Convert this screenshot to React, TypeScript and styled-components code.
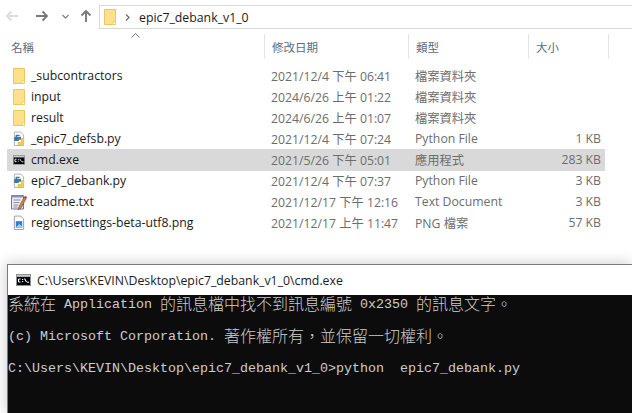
import React from "react";
import styled, { createGlobalStyle } from "styled-components";

const UI_FONT = `"Noto Sans CJK TC", "Noto Sans", sans-serif`;
const LATIN_FONT = `"Open Sans", "Noto Sans CJK TC", sans-serif`;

const GlobalStyle = createGlobalStyle`
  html, body {
    margin: 0;
    padding: 0;
    background: #fff;
  }
  #root {
    width: 632px;
    height: 413px;
    overflow: hidden;
  }
`;

interface FileRow {
  name: string;
  date: string;
  type: string;
  size?: string;
  icon: "folder" | "python" | "cmd" | "text" | "image";
  selected?: boolean;
}

const rows: FileRow[] = [
  { name: "_subcontractors", date: "2021/12/4 下午 06:41", type: "檔案資料夾", icon: "folder" },
  { name: "input", date: "2024/6/26 上午 01:22", type: "檔案資料夾", icon: "folder" },
  { name: "result", date: "2024/6/26 上午 01:07", type: "檔案資料夾", icon: "folder" },
  { name: "_epic7_defsb.py", date: "2021/12/4 下午 07:24", type: "Python File", size: "1 KB", icon: "python" },
  { name: "cmd.exe", date: "2021/5/26 下午 05:01", type: "應用程式", size: "283 KB", icon: "cmd", selected: true },
  { name: "epic7_debank.py", date: "2021/12/4 下午 07:37", type: "Python File", size: "3 KB", icon: "python" },
  { name: "readme.txt", date: "2021/12/17 下午 12:16", type: "Text Document", size: "3 KB", icon: "text" },
  { name: "regionsettings-beta-utf8.png", date: "2021/12/17 上午 11:47", type: "PNG 檔案", size: "57 KB", icon: "image" },
];

const Page = styled.div`
  width: 632px;
  height: 413px;
  display: flex;
  flex-direction: column;
  background: #fff;
`;

const Explorer = styled.div`
  height: 264px;
  flex: none;
  background: #fff;
  font-family: ${LATIN_FONT};
`;

const NavBar = styled.div`
  height: 34px;
  display: flex;
  align-items: flex-start;
`;

const NavButtons = styled.div`
  width: 99px;
  height: 32px;
  flex: none;
  display: flex;
  align-items: center;
  padding-left: 5px;
  box-sizing: border-box;
`;

const NavButton = styled.span<{ $left: number }>`
  width: 14px;
  margin-left: ${(p) => p.$left}px;
  display: flex;
  justify-content: center;
  align-items: center;
`;

const AddressBar = styled.div`
  flex: 1;
  height: 22px;
  margin-top: 5px;
  border: 1px solid #d9d9d9;
  border-right: none;
  display: flex;
  align-items: center;
  padding-left: 4px;
  gap: 9px;
  font-size: 12.3px;
  color: #1a1a1a;
`;

const Header = styled.div`
  height: 25px;
  display: grid;
  grid-template-columns: 265px 144px 120px 80px;
  position: relative;
`;

const HeaderCell = styled.div<{ $pad?: number }>`
  border-right: 1px solid #e5e5e5;
  padding-left: ${(p) => p.$pad ?? 7}px;
  font-size: 11.5px;
  font-family: ${UI_FONT};
  color: #5b6b80;
  display: flex;
  align-items: center;
`;

const SortCaret = styled.svg`
  position: absolute;
  left: 131px;
  top: -1px;
`;

const FileList = styled.div`
  padding-top: 6px;
`;

const Row = styled.div<{ $selected?: boolean }>`
  height: 21px;
  margin-left: 7px;
  width: 598px;
  display: grid;
  grid-template-columns: 257px 144px 120px 73px;
  align-items: center;
  font-size: 12.25px;
  background: ${(p) => (p.$selected ? "#d9d9d9" : "transparent")};
  box-shadow: ${(p) => (p.$selected ? "0 1px 0 #d9d9d9" : "none")};
  color: #6d6d6d;
`;

const NameCell = styled.div`
  display: flex;
  align-items: center;
  gap: 6px;
  padding-left: 6px;
  color: #1a1a1a;
  white-space: nowrap;
`;

const IconSlot = styled.span`
  width: 12px;
  height: 16px;
  display: flex;
  align-items: center;
  justify-content: center;
  flex: none;
`;

const DateCell = styled.div`
  padding-left: 7px;
  white-space: nowrap;
`;

const TypeCell = styled.div`
  padding-left: 7px;
  white-space: nowrap;
`;

const SizeCell = styled.div`
  text-align: right;
  white-space: nowrap;
`;

const ConsoleWindow = styled.div`
  flex: 1;
  margin-left: 7px;
  border: 1px solid #7a7a7a;
  border-right: none;
  border-bottom: none;
  box-shadow: 0 0 14px rgba(0, 0, 0, 0.22);
  display: flex;
  flex-direction: column;
  min-height: 0;
`;

const TitleBar = styled.div`
  height: 30px;
  flex: none;
  background: #fff;
  display: flex;
  align-items: center;
  padding-left: 8px;
  gap: 6px;
  font-family: ${LATIN_FONT};
  font-size: 12.3px;
  color: #1a1a1a;
  white-space: nowrap;
`;

const ConsoleBody = styled.div`
  flex: 1;
  background: #0c0c0c;
  color: #cccccc;
  font-family: "Liberation Mono", monospace;
  font-size: 13.33px;
  line-height: 16px;
  padding-top: 2px;
  white-space: pre;
`;

const ConsoleLine = styled.div`
  height: 32px;
`;

const Wide = styled.span`
  font-family: "Noto Sans CJK TC", sans-serif;
  font-size: 16px;
  font-weight: 300;
  line-height: 0;
  vertical-align: -2px;
`;

const FolderIcon = () => (
  <svg width="12" height="16" viewBox="0 0 12 16">
    <path d="M.5.5h11v15H.5z" fill="#fde08b" stroke="#ebc85a" />
    <path d="M9 12.5h2.5v3H9z" fill="#fff3c9" stroke="#ebc85a" strokeWidth=".7" />
  </svg>
);

const PythonIcon = () => (
  <svg width="13" height="16" viewBox="0 0 13 16">
    <path d="M1.5.5h7l3 3v11.5h-10z" fill="#fff" stroke="#a4aeb9" />
    <path d="M3.2 3.5h4v1.2H4.5v.8h4.2v3.2H6.2v1.6H2.5C.5 10.3.5 5.5 2.8 5.5V4z" fill="#3f77ad" />
    <path d="M10.5 7c2.2 0 2.2 5 .1 5v1.6c0 1.6-5.6 1.6-5.6 0v-2.4h3.6V7z" fill="#f4c93f" />
  </svg>
);

const CmdIcon = () => (
  <svg width="15" height="12" viewBox="0 0 15 12">
    <rect width="15" height="12" fill="#8d9298" />
    <rect x="1" y="1" width="13" height="1.5" fill="#c5c9ce" />
    <rect x="1" y="3" width="13" height="8" fill="#000" />
    <path d="M2.5 5h2M2.5 5v3M2.5 8h2M6 5.5h1.2M6 7.5h1.2M8.5 4.5L10.5 8M11 8.3h2" stroke="#fff" fill="none" strokeWidth="1.1" />
  </svg>
);

const TextIcon = () => (
  <svg width="16" height="16" viewBox="0 0 16 16" style={{ flex: "none" }}>
    <path d="M.5 1.5h12v13.5H.5z" fill="#eeeaf6" stroke="#7470a8" />
    <path d="M.5 1.5h12v2H.5z" fill="#8f8cc0" />
    <path d="M2.5 6h7M2.5 8.5h6M2.5 11h5M2.5 13h4" stroke="#8c8c9c" />
    <path d="M7.5 13.5l5.5-10 2.2 1.2-5.5 10-2.6 1z" fill="#c98236" stroke="#5d4a3c" strokeWidth=".5" />
    <path d="M13 3.5l1-1.8 2 1.2-.8 1.8z" fill="#b23a3a" />
  </svg>
);

const ImageIcon = () => (
  <svg width="13" height="16" viewBox="0 0 13 16">
    <path d="M1.5.5h7l3 3v11.5h-10z" fill="#fff" stroke="#8f9aa7" />
    <rect x="3" y="6" width="7" height="7" fill="#2f7fd6" />
    <path d="M3 13l4-4 3 3v1z" fill="#9fd0f5" />
  </svg>
);

const iconFor = (icon: FileRow["icon"]) => {
  switch (icon) {
    case "folder":
      return <FolderIcon />;
    case "python":
      return <PythonIcon />;
    case "cmd":
      return <CmdIcon />;
    case "text":
      return <TextIcon />;
    default:
      return <ImageIcon />;
  }
};

const Arrow = ({ dir, color }: { dir: "left" | "right" | "up"; color: string }) => {
  const d = {
    left: "M13 7H2M6.5 2.5L2 7l4.5 4.5",
    right: "M1 7h11M7.5 2.5L12 7l-4.5 4.5",
    up: "M7 13V2M2.5 6.5L7 2l4.5 4.5",
  }[dir];
  return (
    <svg width="14" height="14" viewBox="0 0 14 14">
      <path d={d} fill="none" stroke={color} strokeWidth="1.9" />
    </svg>
  );
};

export default function App() {
  return (
    <Page>
      <GlobalStyle />
      <Explorer>
        <NavBar>
          <NavButtons>
            <NavButton $left={0}>
              <Arrow dir="left" color="#dcdcdc" />
            </NavButton>
            <NavButton $left={16}>
              <Arrow dir="right" color="#7a7a7a" />
            </NavButton>
            <NavButton $left={9}>
              <svg width="7" height="5" viewBox="0 0 7 5">
                <path d="M.5 1l3 3 3-3" fill="none" stroke="#8a8a8a" strokeWidth="1.4" />
              </svg>
            </NavButton>
            <NavButton $left={7}>
              <Arrow dir="up" color="#7a7a7a" />
            </NavButton>
          </NavButtons>
          <AddressBar>
            <FolderIcon />
            <svg width="5" height="7" viewBox="0 0 5 7">
              <path d="M1 .5l3 3-3 3" fill="none" stroke="#707070" strokeWidth="1.3" />
            </svg>
            <span>epic7_debank_v1_0</span>
          </AddressBar>
        </NavBar>
        <Header>
          <SortCaret width="9" height="5" viewBox="0 0 9 5">
            <path d="M.5 4.5l4-4 4 4" fill="none" stroke="#707070" />
          </SortCaret>
          <HeaderCell $pad={11}>名稱</HeaderCell>
          <HeaderCell>修改日期</HeaderCell>
          <HeaderCell>類型</HeaderCell>
          <HeaderCell>大小</HeaderCell>
        </Header>
        <FileList>
          {rows.map((row) => (
            <Row key={row.name} $selected={row.selected}>
              <NameCell>
                <IconSlot>{iconFor(row.icon)}</IconSlot>
                {row.name}
              </NameCell>
              <DateCell>{row.date}</DateCell>
              <TypeCell>{row.type}</TypeCell>
              <SizeCell>{row.size}</SizeCell>
            </Row>
          ))}
        </FileList>
      </Explorer>
      <ConsoleWindow>
        <TitleBar>
          <CmdIcon />
          <span>C:\Users\KEVIN\Desktop\epic7_debank_v1_0\cmd.exe</span>
        </TitleBar>
        <ConsoleBody>
          <ConsoleLine>
            <Wide>系統在</Wide> Application <Wide>的訊息檔中找不到訊息編號</Wide> 0x2350 <Wide>的訊息文字。</Wide>
          </ConsoleLine>
          <ConsoleLine>
            (c) Microsoft Corporation. <Wide>{"著作權所有\uFF0C並保留一切權利。"}</Wide>
          </ConsoleLine>
          <ConsoleLine>C:\Users\KEVIN\Desktop\epic7_debank_v1_0&gt;python  epic7_debank.py</ConsoleLine>
        </ConsoleBody>
      </ConsoleWindow>
    </Page>
  );
}
